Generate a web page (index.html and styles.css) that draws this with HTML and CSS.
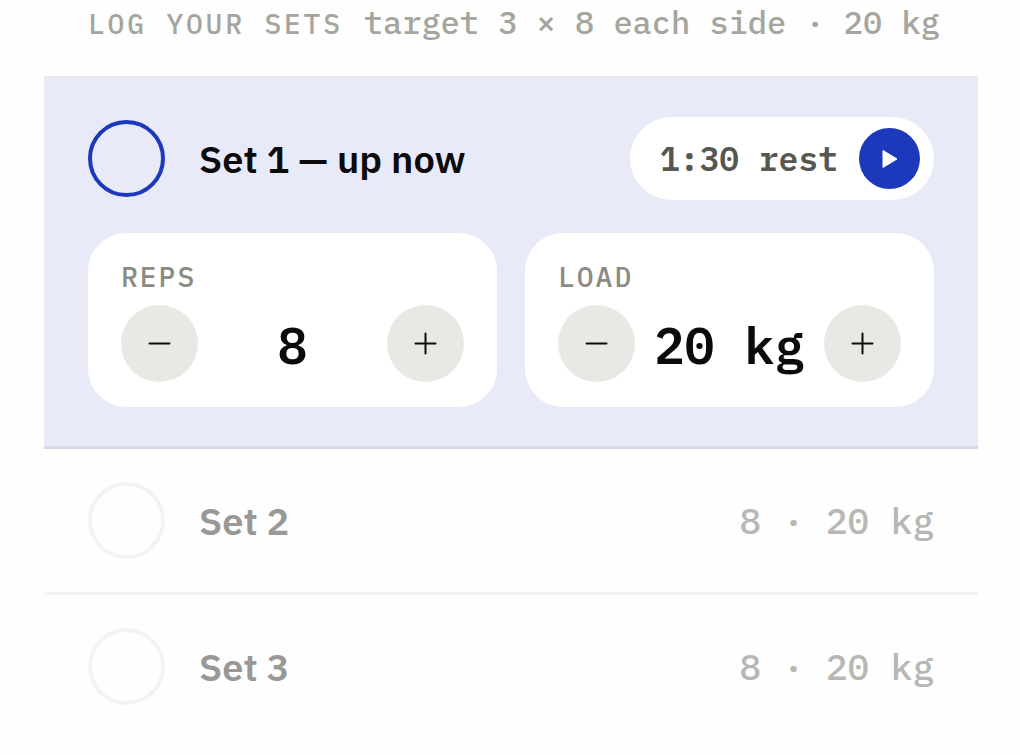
FILE: index.html
```html
<!DOCTYPE html>
<html lang="en">
<head>
  <meta charset="utf-8">
  <meta name="viewport" content="width=device-width, initial-scale=1">
  <title>Log your sets</title>
  <link rel="stylesheet" href="styles.css">
</head>
<body>
  <main class="log">
    <header class="log-head">
      <h1 class="log-title">LOG YOUR SETS</h1>
      <p class="log-target">target 3 × 8 each side · 20 kg</p>
    </header>

    <section class="set set-active">
      <div class="set-row">
        <input type="checkbox" id="set1" class="check">
        <label for="set1" class="set-name">Set 1 — up now</label>
        <div class="rest">
          <span>1:30 rest</span>
          <button type="button" class="play" aria-label="Start rest">
            <svg width="16" height="20" viewBox="0 0 16 20"><path d="M1 1.5 L15 10 L1 18.5 Z" fill="#fff" stroke="#fff" stroke-width="1" stroke-linejoin="round"/></svg>
          </button>
        </div>
      </div>

      <div class="cards">
        <div class="card">
          <p class="card-label">REPS</p>
          <div class="stepper">
            <button type="button" class="step" aria-label="Fewer reps">
              <svg width="23" height="23" viewBox="0 0 23 23"><path d="M1.5 11.5H21.5"/></svg>
            </button>
            <output class="value">8</output>
            <button type="button" class="step" aria-label="More reps">
              <svg width="23" height="23" viewBox="0 0 23 23"><path d="M1.5 11.5H21.5M11.5 1.5V21.5"/></svg>
            </button>
          </div>
        </div>
        <div class="card">
          <p class="card-label">LOAD</p>
          <div class="stepper">
            <button type="button" class="step" aria-label="Less load">
              <svg width="23" height="23" viewBox="0 0 23 23"><path d="M1.5 11.5H21.5"/></svg>
            </button>
            <output class="value">20 kg</output>
            <button type="button" class="step" aria-label="More load">
              <svg width="23" height="23" viewBox="0 0 23 23"><path d="M1.5 11.5H21.5M11.5 1.5V21.5"/></svg>
            </button>
          </div>
        </div>
      </div>
    </section>

    <section class="set set-next">
      <div class="set-row">
        <input type="checkbox" id="set2" class="check">
        <label for="set2" class="set-name">Set 2</label>
        <span class="set-plan">8 · 20 kg</span>
      </div>
    </section>

    <section class="set set-next">
      <div class="set-row">
        <input type="checkbox" id="set3" class="check">
        <label for="set3" class="set-name">Set 3</label>
        <span class="set-plan">8 · 20 kg</span>
      </div>
    </section>
  </main>
</body>
</html>
```
FILE: styles.css
```css
*{
  box-sizing: border-box;
}
body{
  margin: 0;
  background-color: #fefefe;
  color: #0b0b0b;
  font-family: "IBM Plex Mono", "Liberation Mono", monospace;
  font-weight: 500;
}
h1, p{
  margin: 0;
  font-weight: 500;
}
button{
  display: flex;
  align-items: center;
  justify-content: center;
  flex: none;
  padding: 0;
  border: none;
  border-radius: 50%;
  cursor: pointer;
}
.log{
  padding: 0 42px 0 44px;
}
.log-head{
  display: flex;
  align-items: baseline;
  gap: 21px;
  padding: 2px 0 32px 44px;
  color: #a5a59d;
  line-height: 40px;
  white-space: nowrap;
}
.log-title{
  font-size: 28px;
  letter-spacing: 0.1em;
}
.log-target{
  font-size: 32px;
}

/* set rows */
.set{
  padding: 33px 44px;
  border-bottom: 3px solid #f3f3f3;
}
.set:last-child{
  border-bottom: none;
}
.set-active{
  padding: 40px 44px 39px;
  background-color: #e8eaf7;
  border-top: 1px solid #e8e8e6;
  border-bottom-color: #d6d7e7;
}
.set-row{
  display: flex;
  align-items: center;
}
.check{
  appearance: none;
  flex: none;
  width: 77px;
  height: 77px;
  margin: 0 34px 0 0;
  border: 4px solid #f3f3f3;
  border-radius: 50%;
}
.set-active .check{
  border-color: #1d39bb;
}
.set-name{
  flex: 1;
  font-family: "IBM Plex Sans", "Noto Sans", sans-serif;
  font-size: 38px;
  font-weight: 600;
  line-height: 44px;
}
.set-next .set-name{
  color: #989896;
}
.set-plan{
  color: #b7b7b5;
  font-size: 36px;
  line-height: 44px;
}

/* rest timer pill */
.rest{
  display: flex;
  align-items: center;
  gap: 21px;
  padding: 11px 14px 11px 30px;
  border-radius: 42px;
  background-color: #fff;
  color: #575752;
  font-size: 33px;
  font-weight: 600;
}
.play{
  width: 61px;
  height: 61px;
  background-color: #1d39bb;
}

/* reps and load */
.cards{
  display: grid;
  grid-template-columns: 1fr 1fr;
  gap: 28px;
  margin-top: 33px;
}
.card{
  padding: 28px 33px 25px;
  border-radius: 38px;
  background-color: #fff;
}
.card-label{
  margin-bottom: 12px;
  color: #8b8b84;
  font-size: 28px;
  line-height: 32px;
  letter-spacing: 2px;
}
.stepper{
  display: flex;
  align-items: center;
  justify-content: space-between;
}
.step{
  width: 77px;
  height: 77px;
  background-color: #e8e8e4;
}
.step svg{
  fill: none;
  stroke: #0b0b0b;
  stroke-width: 2;
  stroke-linecap: round;
}
.value{
  padding-top: 4px;
  font-size: 50px;
  font-weight: 600;
  line-height: 60px;
}
```
